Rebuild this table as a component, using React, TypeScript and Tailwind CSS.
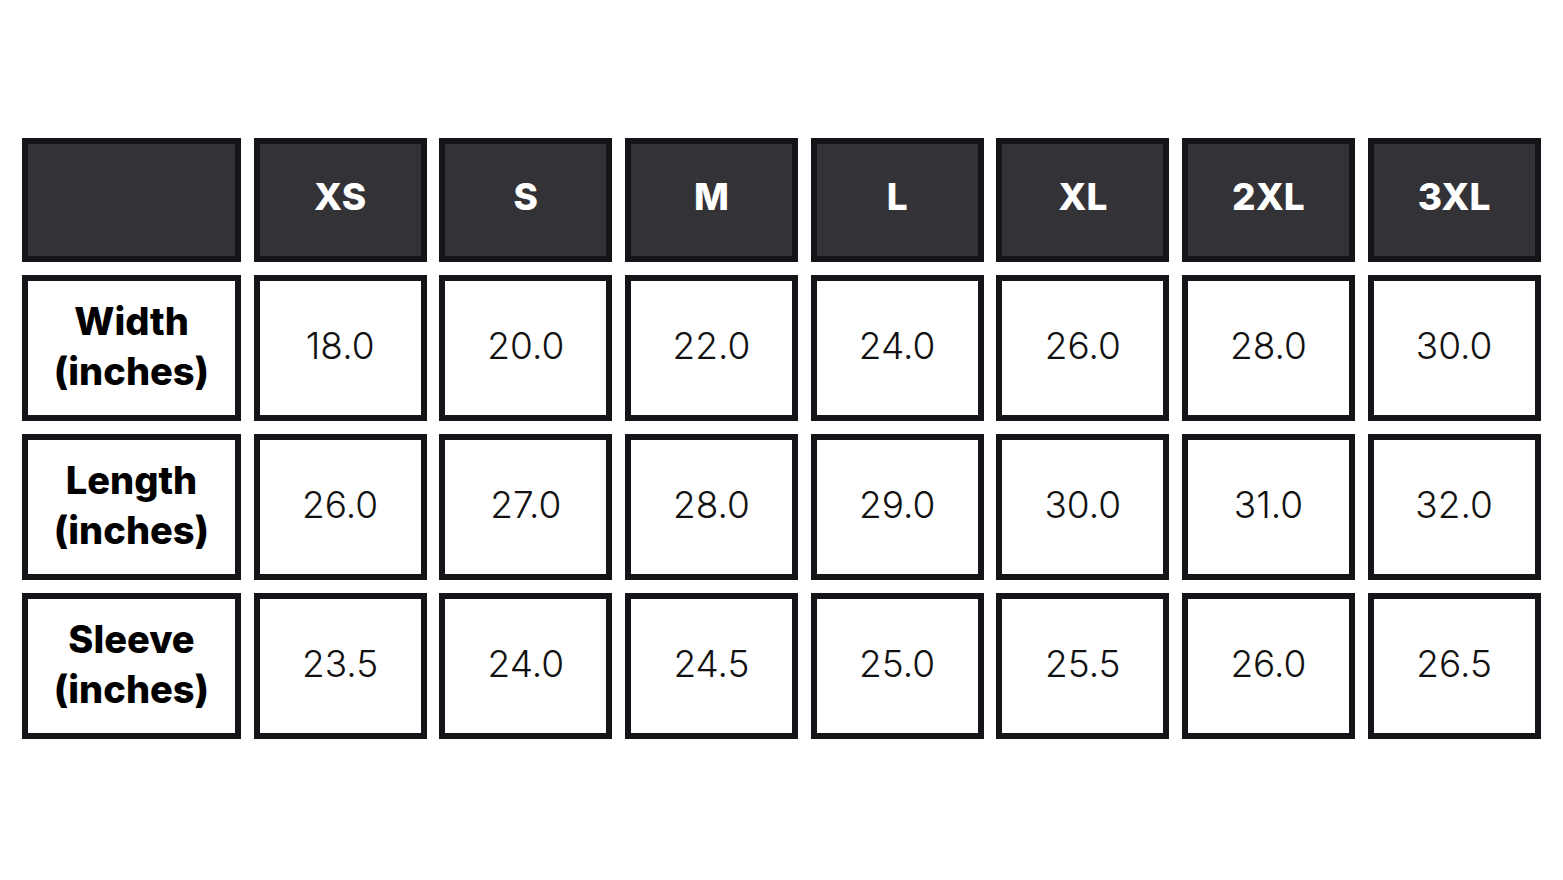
import React from "react";

const sizes = ["XS", "S", "M", "L", "XL", "2XL", "3XL"];
const rows = [
  { label: "Width", values: ["18.0", "20.0", "22.0", "24.0", "26.0", "28.0", "30.0"] },
  { label: "Length", values: ["26.0", "27.0", "28.0", "29.0", "30.0", "31.0", "32.0"] },
  { label: "Sleeve", values: ["23.5", "24.0", "24.5", "25.0", "25.5", "26.0", "26.5"] },
];

export default function App() {
  return (
    <div
      className="w-[1563px] h-[880px] bg-white pt-[138px] pl-[22px]"
      style={{ fontFamily: "Inter, 'Noto Sans', sans-serif" }}
    >
      <div className="grid grid-cols-[219px_repeat(7,173px)] grid-rows-[124px_repeat(3,146px)] gap-x-[12.67px] gap-y-[13px]">
        <div className="border-[6px] border-[#141419] bg-[#333237]" />
        {sizes.map((s) => (
          <div
            key={s}
            className="border-[6px] border-[#141419] bg-[#333237] flex items-center justify-center pb-[7px] text-white font-extrabold text-[37px] leading-none"
          >
            {s}
          </div>
        ))}
        {rows.map((r) => (
          <React.Fragment key={r.label}>
            <div className="border-[6px] border-[#141419] bg-white flex flex-col items-center justify-center pb-[4px] text-black font-extrabold text-[38px] leading-[50px]">
              <span>{r.label}</span>
              <span>(inches)</span>
            </div>
            {r.values.map((v, i) => (
              <div
                key={i}
                className="border-[6px] border-[#141419] bg-white flex items-center justify-center pb-[6px] text-[#111] font-[350] text-[37px] leading-none"
              >
                {v}
              </div>
            ))}
          </React.Fragment>
        ))}
      </div>
    </div>
  );
}
